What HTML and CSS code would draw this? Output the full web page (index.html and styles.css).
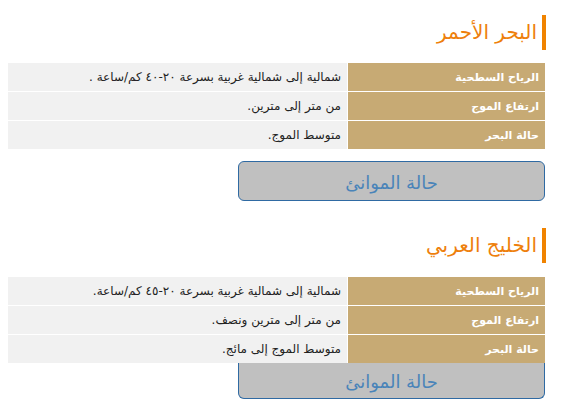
FILE: index.html
```html
<!DOCTYPE html>
<html lang="ar" dir="rtl">
<head>
<meta charset="utf-8">
<link rel="stylesheet" href="styles.css">
</head>
<body>
<main class="page">
  <section class="sea">
    <h2 class="title">البحر الأحمر</h2>
    <div class="info">
      <div class="label">الرياح السطحية</div>
      <div class="value">شمالية إلى شمالية غربية بسرعة ٢٠-٤٠ كم/ساعة .</div>
      <div class="label">ارتفاع الموج</div>
      <div class="value">من متر إلى مترين.</div>
      <div class="label">حالة البحر</div>
      <div class="value">متوسط الموج.</div>
    </div>
    <a class="ports" href="#">حالة الموانئ</a>
  </section>
  <section class="sea second">
    <h2 class="title">الخليج العربي</h2>
    <div class="info">
      <div class="label">الرياح السطحية</div>
      <div class="value">شمالية إلى شمالية غربية بسرعة ٢٠-٤٥ كم/ساعة.</div>
      <div class="label">ارتفاع الموج</div>
      <div class="value">من متر إلى مترين ونصف.</div>
      <div class="label">حالة البحر</div>
      <div class="value">متوسط الموج إلى مائج.</div>
    </div>
    <a class="ports cut" href="#">حالة الموانئ</a>
  </section>
</main>
</body>
</html>
```
FILE: styles.css
```css
html, body {
  margin: 0;
  padding: 0;
  background: #ffffff;
}
body {
  font-family: "DejaVu Sans", sans-serif;
}
.page {
  margin: 0 17px 0 8px;
  padding-top: 15px;
}
.sea {
  display: flex;
  flex-direction: column;
  align-items: stretch;
}
.second {
  margin-top: 27px;
}
.title {
  margin: 0 -1px 0 0;
  height: 35px;
  border-right: 4px solid #f08300;
  padding-right: 5px;
  font-size: 20px;
  font-weight: normal;
  line-height: 35px;
  color: #ee7f0c;
}
.info {
  margin-top: 13px;
  display: grid;
  grid-template-columns: 197px 1fr;
  grid-auto-rows: 28px;
  gap: 1px;
  background: #ffffff;
}
.second .info {
  margin-top: 14px;
}
.label {
  background: #c7aa74;
  color: #ffffff;
  font-size: 11px;
  font-weight: bold;
  padding-right: 6px;
  display: flex;
  align-items: center;
}
.value {
  background: #f1f1f1;
  color: #222222;
  font-size: 12px;
  padding-right: 6px;
  display: flex;
  align-items: center;
}
.ports {
  margin-top: 12px;
  align-self: flex-start;
  width: 305px;
  height: 36px;
  padding-top: 2px;
  box-sizing: content-box;
  border: 1px solid #2f6aa3;
  border-radius: 6px;
  background: #c0c0c0;
  color: #4a84b9;
  font-size: 18px;
  text-decoration: none;
  display: flex;
  align-items: center;
  justify-content: center;
}
.ports.cut {
  margin-top: 0;
  height: 34px;
  padding-top: 1px;
  border-top: none;
  border-radius: 0 0 6px 6px;
}
```
